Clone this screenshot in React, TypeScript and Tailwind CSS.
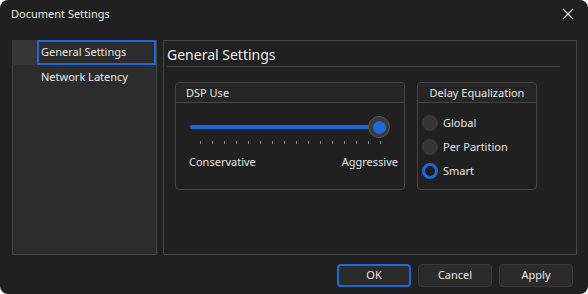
import React from 'react';

const ticks = Array.from({ length: 16 }, (_, i) => i);

const Radio: React.FC<{ label: string; checked?: boolean }> = ({ label, checked }) => (
  <div className="flex items-center h-[24px]">
    {checked ? (
      <span className="w-[16px] h-[16px] rounded-full border-[3px] border-[#1f66d9] bg-[#1c1c1c]" />
    ) : (
      <span className="w-[16px] h-[16px] rounded-full bg-[#353535] border border-[#3c3c3c]" />
    )}
    <span className="ml-[5px] text-[11px] text-[#e4e4e4]">{label}</span>
  </div>
);

export default function App() {
  return (
    <div className="w-[588px] h-[294px] bg-white" style={{ fontFamily: '"Noto Sans", sans-serif' }}>
      <div className="w-full h-full bg-[#202020] rounded-[8px] flex flex-col">
        {/* Title bar */}
        <div className="h-[28px] flex items-center justify-between pl-[11px] pr-[14px]">
          <span className="text-[11px] text-[#e8e8e8]">Document Settings</span>
          <svg width="12" height="12" viewBox="0 0 12 12" className="text-[#e0e0e0]">
            <path d="M1 1 L11 11 M11 1 L1 11" stroke="currentColor" strokeWidth="1.2" />
          </svg>
        </div>

        {/* Body */}
        <div className="flex gap-[6px] pl-[12px] pr-[11px] mt-[12px] h-[215px]">
          {/* Tree */}
          <div className="w-[145px] bg-[#2c2c2c] border border-[#474747]">
            <div className="flex h-[25px] -mt-px -ml-px">
              <div className="w-[25px] bg-[#363636]" />
              <div className="flex-1 border-2 border-[#1f66d9] flex items-center pl-[2px] text-[11px] text-[#e8e8e8]">
                General Settings
              </div>
            </div>
            <div className="h-[24px] flex items-center pl-[28px] text-[11px] text-[#e8e8e8]">Network Latency</div>
          </div>

          {/* Page */}
          <div className="flex-1 border border-[#474747]">
            <div className="ml-[3px] mr-[16px] h-[26px] flex items-center pt-[2px] border-b border-[#444444]">
              <span className="text-[14px] leading-none text-[#ededed]">General Settings</span>
            </div>
            <div className="flex gap-[12px] mt-[15px] ml-[11px]">
              {/* DSP Use */}
              <div className="w-[230px] h-[108px] rounded-[4px] border border-[#444444]">
                <div className="h-[20px] bg-[#262626] border-b border-[#444444] rounded-t-[4px] pl-[10px] pt-px flex items-center text-[11px] text-[#e4e4e4]">
                  DSP Use
                </div>
                <div className="relative h-[36px] mx-[14px]">
                  <div className="absolute left-0 right-[12px] top-[22px] h-[4px] rounded-full bg-[#1f66d9]" />
                  <div className="absolute right-0 top-[13px] w-[22px] h-[22px] rounded-full bg-[#3a3a3a] border border-[#555555] flex items-center justify-center">
                    <span className="w-[13px] h-[13px] rounded-full bg-[#1f66d9]" />
                  </div>
                </div>
                <div className="flex justify-between ml-[24px] mr-[23px] mt-[2px] h-[3px]">
                  {ticks.map(t => (
                    <span key={t} className="w-px h-[3px] bg-[#8a8a8a]" />
                  ))}
                </div>
                <div className="flex justify-between ml-[13px] mr-[6px] mt-[10px] text-[11px] text-[#e4e4e4]">
                  <span>Conservative</span>
                  <span>Aggressive</span>
                </div>
              </div>

              {/* Delay Equalization */}
              <div className="w-[120px] h-[108px] rounded-[4px] border border-[#444444]">
                <div className="h-[20px] bg-[#262626] border-b border-[#444444] rounded-t-[4px] pt-px flex items-center justify-center text-[11px] text-[#e4e4e4]">
                  Delay Equalization
                </div>
                <div className="pl-[4px] pt-[8px]">
                  <Radio label="Global" />
                  <Radio label="Per Partition" />
                  <Radio label="Smart" checked />
                </div>
              </div>
            </div>
          </div>
        </div>

        {/* Footer */}
        <div className="flex justify-end gap-[7px] pr-[15px] mt-[9px]">
          <button className="w-[74px] h-[23px] rounded-[4px] border-2 border-[#1f66d9] bg-[#2b2b2b] text-[11px] text-[#e8e8e8]">OK</button>
          <button className="w-[74px] h-[23px] rounded-[4px] border border-[#3a3a3a] bg-[#2b2b2b] text-[11px] text-[#e8e8e8]">Cancel</button>
          <button className="w-[74px] h-[23px] rounded-[4px] border border-[#3a3a3a] bg-[#2b2b2b] text-[11px] text-[#e8e8e8]">Apply</button>
        </div>
      </div>
    </div>
  );
}
